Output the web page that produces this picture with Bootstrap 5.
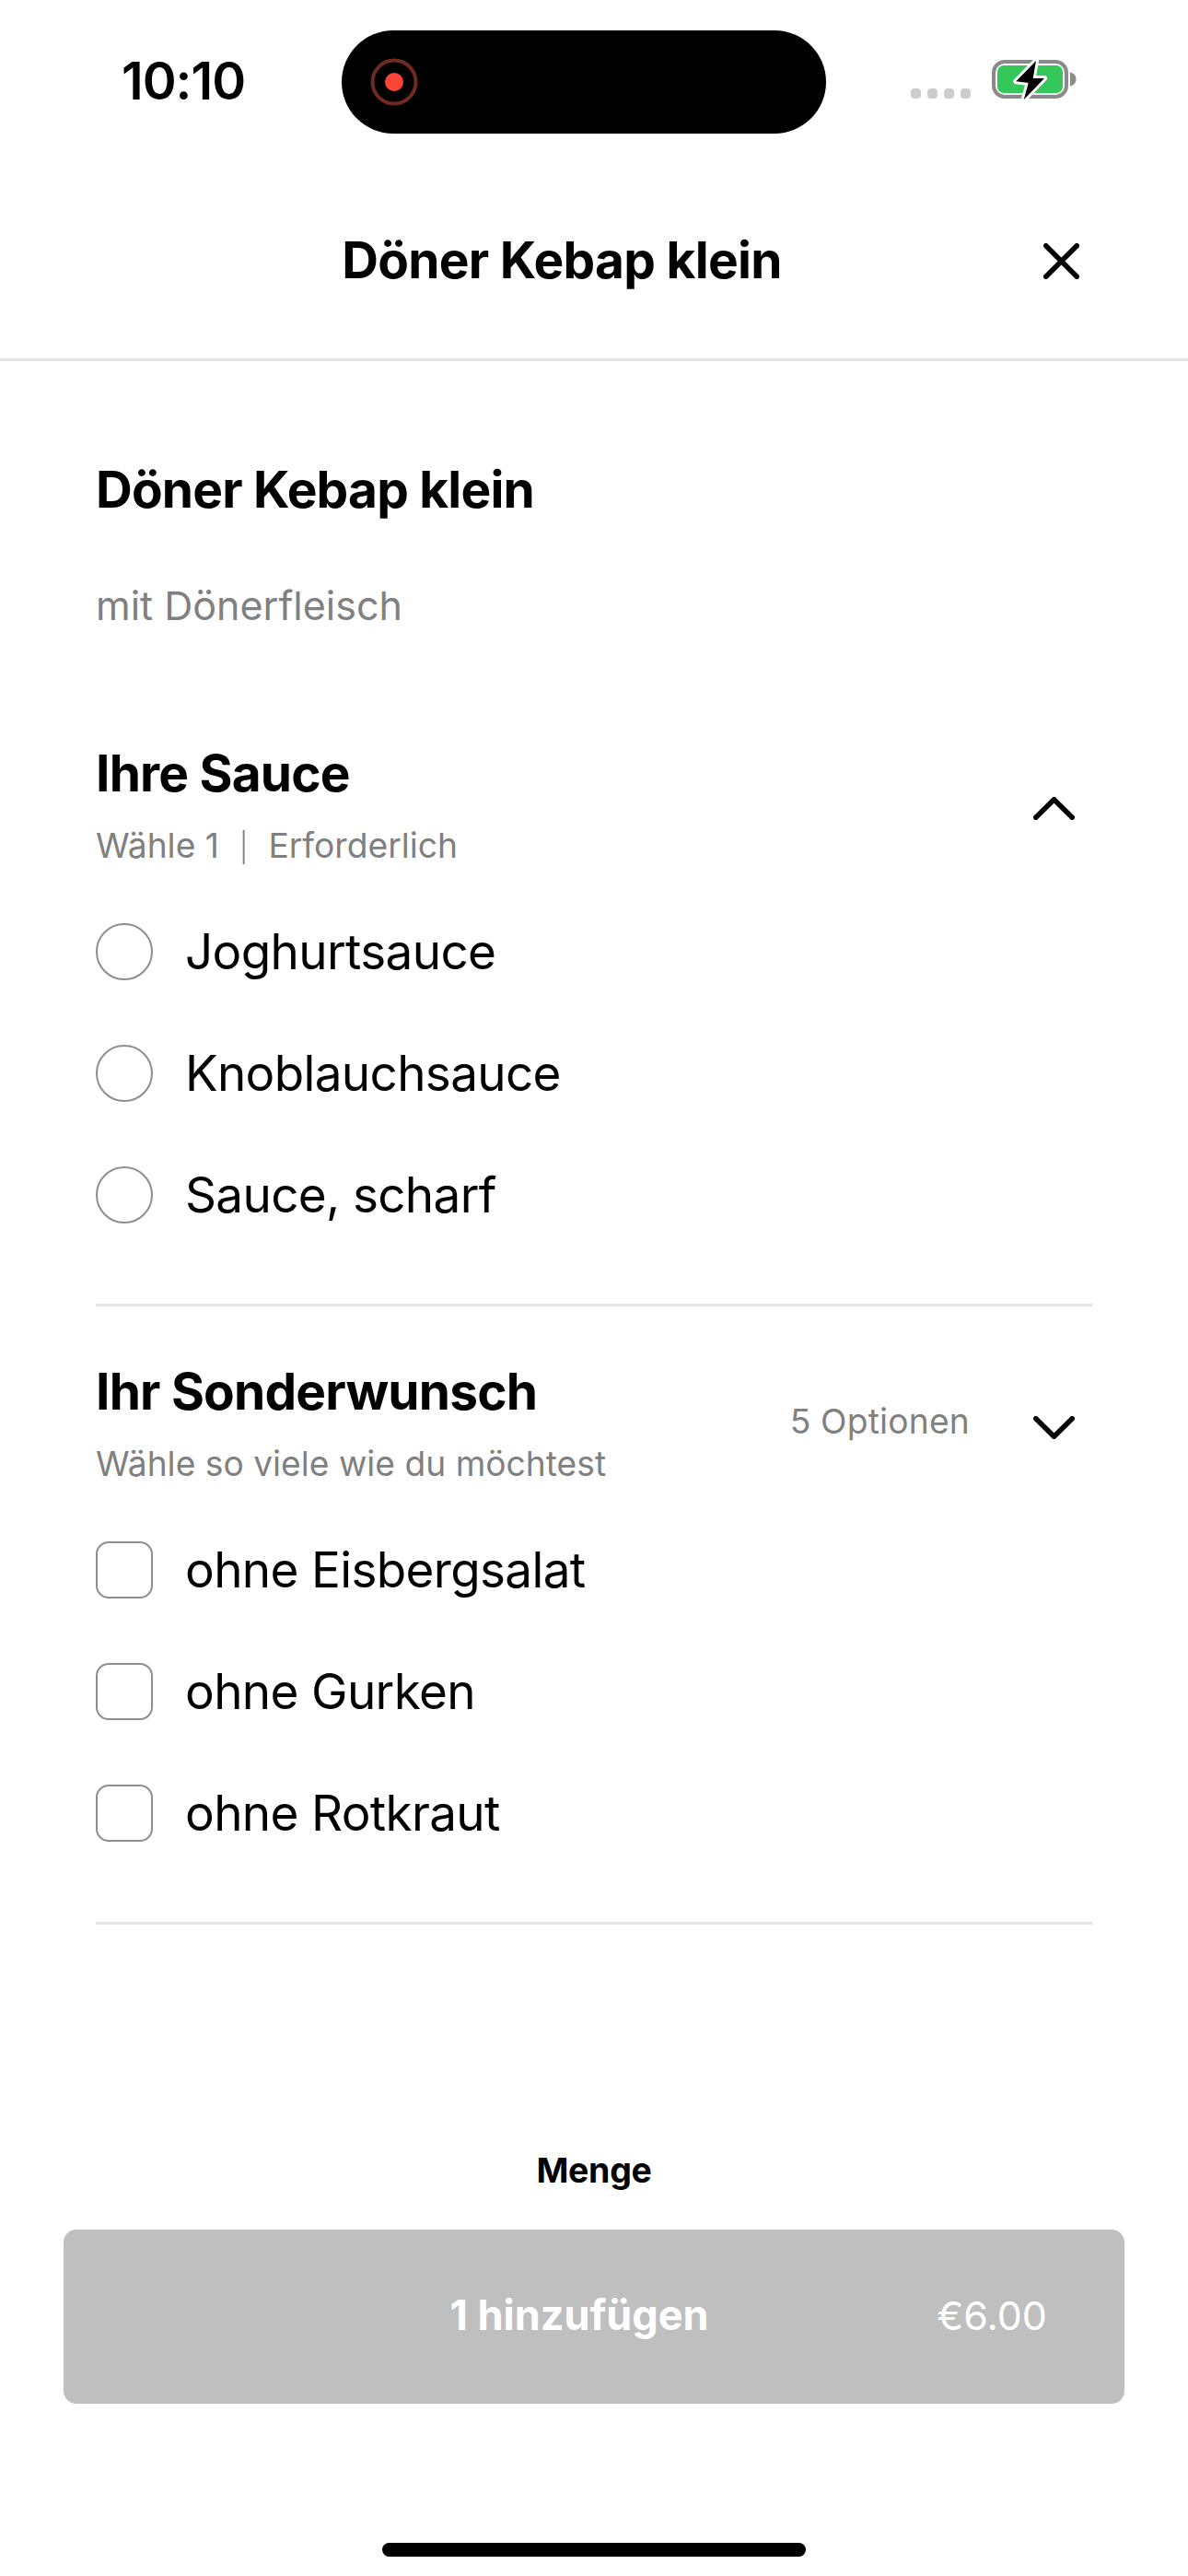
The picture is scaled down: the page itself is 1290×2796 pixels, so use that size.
<!DOCTYPE html>
<html lang="de">
<head>
<meta charset="utf-8">
<title>Döner Kebap klein</title>
<link href="https://cdn.jsdelivr.net/npm/bootstrap@5.3.0/dist/css/bootstrap.min.css" rel="stylesheet">
<style>
html,body{background:#fff;}
body{font-family:Inter,"Liberation Sans",sans-serif;color:#000;width:1290px;height:2796px;overflow:hidden;}
.app-shell{height:2796px;display:flex;flex-direction:column;}
.status-row{height:178px;padding:33px 0 0 132px;align-items:flex-start;}
.clock{font-size:56px;font-weight:600;line-height:110px;width:239px;letter-spacing:-1px;}
.island{width:526px;height:112px;border-radius:56px;background:#000;padding-left:31px;}
.status-right{margin-left:90px;width:185px;padding-top:24px;}
.status-right svg{overflow:visible;}
.top-head{height:214px;padding:0 118px 0 0;border-bottom:3px solid #e4e4e4;}
.top-title{font-size:55px;font-weight:700;letter-spacing:-.7px;line-height:1.2;padding:0 0 4px 87px;flex:1 1 auto;text-align:center;margin:0;}
.content-area{padding:0 104px;flex:1 1 auto;}
.dish-title{font-size:55px;font-weight:700;letter-spacing:-.8px;line-height:62px;margin:108px 0 0;}
.dish-desc{font-size:43px;color:#808080;line-height:56px;margin:67px 0 0;}
.opt-group{border-bottom:3px solid #e4e4e4;padding-bottom:52px;}
.sauce-group{margin-top:123px;}
.wish-group{margin-top:61px;}
.opt-head{align-items:flex-start;}
.opt-title{font-size:55px;font-weight:700;letter-spacing:-.8px;line-height:62px;margin:0;}
.opt-sub{font-size:37.2px;color:#808080;line-height:48px;margin:24px 0 25px;}
.pipe-mark{font-size:31px;font-weight:300;line-height:1;padding:0 1px;}
.opt-count{font-size:37.2px;color:#808080;line-height:48px;margin-top:40px;margin-right:69px;letter-spacing:.2px;}
.chev-up{margin-top:57px;margin-right:19px;flex:none;}
.chev-down{margin-top:58px;margin-right:19px;flex:none;}
.opt-line{height:132px;gap:35px;font-size:53px;line-height:64px;letter-spacing:-.65px;}
.pick{width:62px;height:62px;margin:0;border:2.500px solid #8e8e8e;background-color:#fff;flex:0 0 62px;float:none;}
.form-check-input.pick[type=checkbox]{border-radius:14px;}
.order-zone{padding:0 69px;}
.qty-label{font-size:37.500px;font-weight:700;text-align:center;line-height:44px;letter-spacing:-.3px;margin-bottom:42px;}
.add-btn{width:1152px;height:189px;background:#bfbfbf!important;border:0!important;border-radius:14px;color:#fff!important;opacity:1!important;position:relative;font-size:45px;line-height:54px;padding:0 0 3px;}
.add-main{font-weight:700;margin-right:32px;}
.add-price{position:absolute;right:84px;top:49%;transform:translateY(-50%);font-size:43px;font-weight:400;}
.home-wrap{height:187px;padding-top:151px;}
.home-bar{width:460px;height:15px;border-radius:8px;background:#000;}
</style>
</head>
<body>
<div class="app-shell">
  <div class="status-row d-flex">
    <div class="clock">10:10</div>
    <div class="island d-flex align-items-center">
      <svg width="52" height="52" viewBox="0 0 52 52"><circle cx="26" cy="26" r="23.5" fill="none" stroke="#702a22" stroke-width="4"/><circle cx="26" cy="26" r="10" fill="#ff453a"/></svg>
    </div>
    <div class="status-right d-flex align-items-start">
      <svg width="185" height="60" viewBox="0 0 185 60">
        <g fill="#cdcdcd"><rect x="2" y="39" width="11" height="11" rx="4"/><rect x="20" y="39" width="11" height="11" rx="4"/><rect x="38" y="39" width="11" height="11" rx="4"/><rect x="56" y="39" width="11" height="11" rx="4"/></g>
        <rect x="92" y="10" width="79" height="38" rx="12" fill="none" stroke="#8a8a8a" stroke-width="4"/>
        <path d="M175 21.500c4 .8 6.500 3.800 6.500 7.500s-2.500 6.700-6.500 7.500z" fill="#8a8a8a"/>
        <rect x="96" y="14" width="71" height="30" rx="7" fill="#34c759"/>
        <path d="M138 9 116.300 31.300 129.700 33 124.700 51.300 147 28 134.700 28z" fill="#000" stroke="#fff" stroke-width="6" stroke-linejoin="round" paint-order="stroke"/>
      </svg>
    </div>
  </div>
  <header class="top-head d-flex align-items-center">
    <h1 class="top-title">Döner Kebap klein</h1>
    <button type="button" class="btn p-0 border-0 d-flex" aria-label="Schließen">
      <svg width="39" height="39" viewBox="0 0 39 39"><path d="M2.750 2.750l33.500 33.500M36.250 2.750l-33.500 33.500" stroke="#000" stroke-width="5.500" stroke-linecap="round"/></svg>
    </button>
  </header>
  <main class="content-area">
    <h2 class="dish-title">Döner Kebap klein</h2>
    <p class="dish-desc">mit Dönerfleisch</p>
    <section class="opt-group sauce-group">
      <div class="opt-head d-flex justify-content-between">
        <div>
          <h3 class="opt-title">Ihre Sauce</h3>
          <p class="opt-sub">Wähle 1&nbsp; <span class="pipe-mark">|</span>&nbsp; Erforderlich</p>
        </div>
        <svg class="chev-up" width="45" height="25" viewBox="0 0 45 25"><path d="M2.750 22.250 22.500 2.750 42.250 22.250" fill="none" stroke="#000" stroke-width="5.500" stroke-linecap="round" stroke-linejoin="round"/></svg>
      </div>
      <div class="opt-list">
        <label class="opt-line d-flex align-items-center"><input class="form-check-input pick" type="radio" name="sauce"><span>Joghurtsauce</span></label>
        <label class="opt-line d-flex align-items-center"><input class="form-check-input pick" type="radio" name="sauce"><span>Knoblauchsauce</span></label>
        <label class="opt-line d-flex align-items-center"><input class="form-check-input pick" type="radio" name="sauce"><span>Sauce, scharf</span></label>
      </div>
    </section>
    <section class="opt-group wish-group">
      <div class="opt-head d-flex justify-content-between">
        <div>
          <h3 class="opt-title">Ihr Sonderwunsch</h3>
          <p class="opt-sub">Wähle so viele wie du möchtest</p>
        </div>
        <div class="d-flex align-items-start">
          <span class="opt-count">5 Optionen</span>
          <svg class="chev-down" width="45" height="25" viewBox="0 0 45 25"><path d="M2.750 2.750 22.500 22.250 42.250 2.750" fill="none" stroke="#000" stroke-width="5.500" stroke-linecap="round" stroke-linejoin="round"/></svg>
        </div>
      </div>
      <div class="opt-list">
        <label class="opt-line d-flex align-items-center"><input class="form-check-input pick" type="checkbox"><span>ohne Eisbergsalat</span></label>
        <label class="opt-line d-flex align-items-center"><input class="form-check-input pick" type="checkbox"><span>ohne Gurken</span></label>
        <label class="opt-line d-flex align-items-center"><input class="form-check-input pick" type="checkbox"><span>ohne Rotkraut</span></label>
      </div>
    </section>
  </main>
  <footer class="order-zone">
    <div class="qty-label">Menge</div>
    <button type="button" class="btn add-btn d-flex align-items-center justify-content-center" disabled><span class="add-main">1 hinzufügen</span><span class="add-price">€6.00</span></button>
    <div class="home-wrap d-flex justify-content-center"><div class="home-bar"></div></div>
  </footer>
</div>
</body>
</html>
